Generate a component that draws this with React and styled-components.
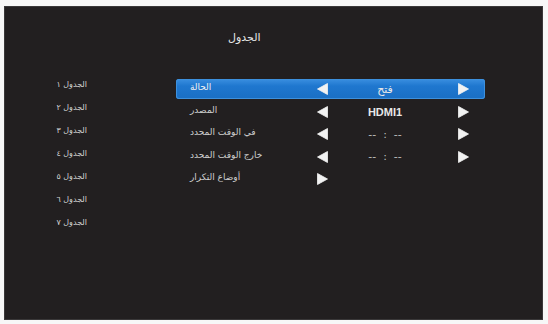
import React from "react";
import styled, { createGlobalStyle } from "styled-components";

const GlobalStyle = createGlobalStyle`
  html, body {
    margin: 0;
    padding: 0;
    background: #f7f7f7;
    font-family: "DejaVu Sans", "Noto Sans", sans-serif;
  }
`;

const Screen = styled.div`
  margin: 6px 0 0 4px;
  width: 539px;
  height: 314px;
  box-sizing: border-box;
  background: #221f20;
  border: 1px solid #3a3839;
  display: flex;
  flex-direction: column;
`;

const Header = styled.div`
  height: 66px;
  padding-left: 223px;
  padding-top: 23px;
  box-sizing: border-box;
`;

const Title = styled.div`
  width: fit-content;
  color: #e6e6e6;
  font-size: 11px;
  line-height: 16px;
`;

const Body = styled.div`
  display: flex;
  align-items: flex-start;
`;

const ScheduleList = styled.div`
  width: 82px;
  display: flex;
  flex-direction: column;
  margin-top: 0;
`;

const ScheduleItem = styled.div`
  height: 23px;
  line-height: 23px;
  text-align: right;
  color: #d4d4d4;
  font-size: 8px;
`;

const Menu = styled.div`
  margin-left: 89px;
  margin-top: 6px;
  width: 309px;
  display: flex;
  flex-direction: column;
  gap: 2.5px;
`;

const Row = styled.div`
  height: 20px;
  display: grid;
  grid-template-columns: 140px 12px 114px 27px;
  align-items: center;
  border-radius: 3px;
  background: ${(p) =>
    p.$active ? "linear-gradient(#3a8fe0, #1f77cf 35%, #1a6fc4)" : "transparent"};
  box-shadow: ${(p) => (p.$active ? "inset 0 0 0 1px #3d90dd" : "none")};
`;

const Label = styled.div`
  width: fit-content;
  padding-left: 14px;
  margin-bottom: 4px;
  color: ${(p) => (p.$active ? "#f2f2f2" : "#cfcfcf")};
  font-size: 9px;
  white-space: nowrap;
`;

const Value = styled.div`
  text-align: center;
  color: ${(p) => (p.$dim ? "#bdbdbd" : "#e8e8e8")};
  font-size: 11px;
  white-space: pre;
  font-family: ${(p) => (p.$latin ? '"Liberation Sans", sans-serif' : "inherit")};
  font-weight: ${(p) => (p.$latin ? 700 : 400)};
`;

const ArrowBox = styled.div`
  display: flex;
  justify-content: ${(p) => (p.$end ? "flex-end" : "center")};
  align-items: center;
`;

const Arrow = ({ dir, end }) => (
  <ArrowBox $end={end}>
    <svg width="11" height="12" viewBox="0 0 11 12">
      {dir === "left" ? (
        <polygon points="10.5,0.5 10.5,11.5 0.5,6" fill="#f2f2f2" stroke="#f2f2f2" strokeWidth="0.8" strokeLinejoin="round" />
      ) : (
        <polygon points="0.5,0.5 0.5,11.5 10.5,6" fill="#f2f2f2" stroke="#f2f2f2" strokeWidth="0.8" strokeLinejoin="round" />
      )}
    </svg>
  </ArrowBox>
);

const schedules = ["الجدول ١", "الجدول ٢", "الجدول ٣", "الجدول ٤", "الجدول ٥", "الجدول ٦", "الجدول ٧"];

const rows = [
  { label: "الحالة", value: "فتح", active: true },
  { label: "المصدر", value: "HDMI1", latin: true },
  { label: "في الوقت المحدد", value: "--  :  --", dash: true },
  { label: "خارج الوقت المحدد", value: "--  :  --", dash: true },
  { label: "أوضاع التكرار", only: true },
];

export default function App() {
  return (
    <>
      <GlobalStyle />
      <Screen>
        <Header>
          <Title dir="rtl">الجدول</Title>
        </Header>
        <Body>
          <ScheduleList>
            {schedules.map((s) => (
              <ScheduleItem key={s} dir="rtl">{s}</ScheduleItem>
            ))}
          </ScheduleList>
          <Menu>
            {rows.map((r) => (
              <Row key={r.label} $active={r.active}>
                <Label $active={r.active} dir="rtl">{r.label}</Label>
                {r.only ? (
                  <Arrow dir="right" />
                ) : (
                  <>
                    <Arrow dir="left" />
                    <Value dir={r.latin || r.dash ? "ltr" : "rtl"} $latin={r.latin} $dim={r.dash}>{r.value}</Value>
                    <Arrow dir="right" end />
                  </>
                )}
              </Row>
            ))}
          </Menu>
        </Body>
      </Screen>
    </>
  );
}
